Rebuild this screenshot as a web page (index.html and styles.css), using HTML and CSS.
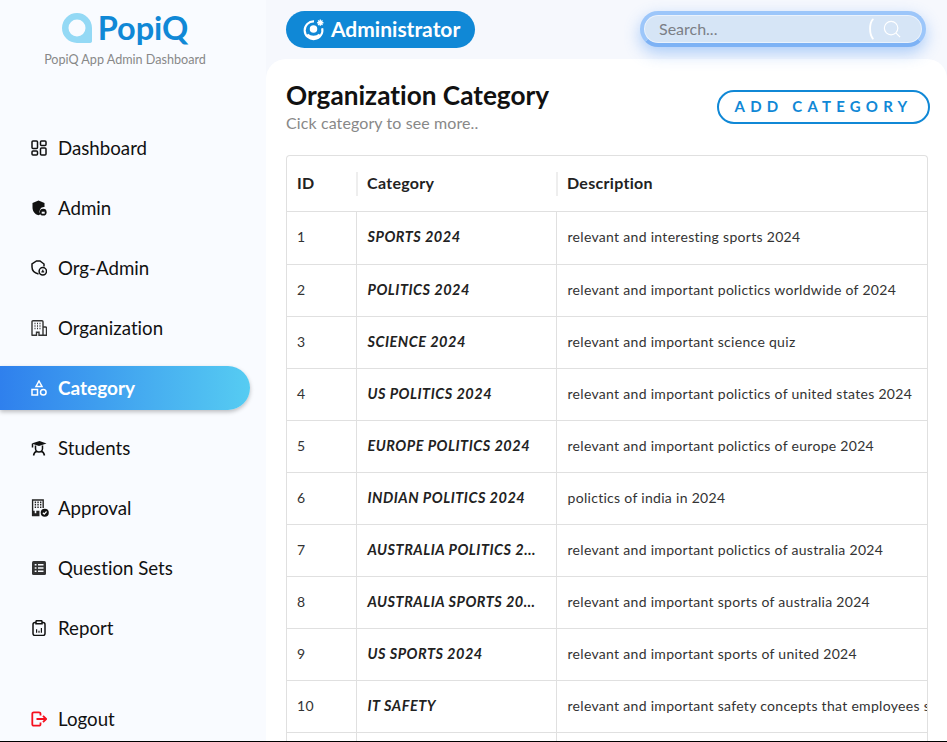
FILE: index.html
```html
<!DOCTYPE html>
<html lang="en">
<head>
  <meta charset="UTF-8">
  <title>PopiQ App Admin Dashboard</title>
  <link rel="stylesheet" href="styles.css">
</head>
<body>
  <aside class="sidebar">
    <div class="brand">
      <div class="brand-row">
        <svg class="brand-q" viewBox="0 0 30 30"><path fill-rule="evenodd" d="M15 0a15 15 0 0 1 15 15v12.500a2 2 0 0 1-2 2.500H15a15 15 0 0 1 0-30zM15 6.500a8.500 8.500 0 1 0 0 17 8.500 8.500 0 0 0 0-17z" fill="#94d9f5"/></svg>
        <span class="brand-name">PopiQ</span>
      </div>
      <div class="brand-sub">PopiQ App Admin Dashboard</div>
    </div>
    <nav class="nav">
      <a class="nav-item" href="#">
        <svg class="nav-icon" viewBox="0 0 16 16" fill="none" stroke="#111" stroke-width="1.5"><rect x="1" y="1" width="5.500" height="7.500" rx="1"/><rect x="9.500" y="1" width="5.500" height="4.500" rx="1"/><rect x="1" y="11" width="5.500" height="4" rx="1"/><rect x="9.500" y="8" width="5.500" height="7" rx="1"/></svg>
        <span class="nav-label">Dashboard</span>
      </a>
      <a class="nav-item" href="#">
        <svg class="nav-icon" viewBox="0 0 16 16"><path d="M7.500 .5l6 2.500v4a4.500 4.500 0 0 0-4 7.300l-2 1C3.500 14.300 1.500 11 1.500 7.500V3z" fill="#111"/><circle cx="12.200" cy="12.200" r="3.400" fill="#111"/><rect x="10.700" y="11.700" width="3" height="2" fill="#f9fbff"/></svg>
        <span class="nav-label">Admin</span>
      </a>
      <a class="nav-item" href="#">
        <svg class="nav-icon" viewBox="0 0 16 16" fill="none" stroke="#111" stroke-width="1.500"><path d="M7.500 14C3.500 13 1 10.500 1 7V4l4.500-3h3.500l4 3v2.500"/><circle cx="11.800" cy="11.300" r="3.700"/><path d="M10.400 11.800h2.800M11.800 9.700v1.800" stroke-width="1.200"/></svg>
        <span class="nav-label">Org-Admin</span>
      </a>
      <a class="nav-item" href="#">
        <svg class="nav-icon" viewBox="0 0 16 16" fill="none" stroke="#333" stroke-width="1.400"><path d="M1 15.300V1.700a1 1 0 0 1 1-1h9a1 1 0 0 1 1 1v13.600M.5 15.300h5v-3h2.500v3h4M12 7h2.500a1 1 0 0 1 1 1v7.300H12"/><path d="M3.500 3.500h1M6 3.500h1M8.500 3.500h1M3.500 6h1M6 6h1M8.500 6h1M3.500 8.500h1M6 8.500h1M8.500 8.500h1" stroke-width="1.300"/></svg>
        <span class="nav-label">Organization</span>
      </a>
      <a class="nav-item active" href="#">
        <svg class="nav-icon" viewBox="0 0 16 16" fill="none" stroke="#fff" stroke-width="1.500"><path d="M8 1l3 5.500H5z"/><rect x="1" y="9.500" width="5.500" height="5.500"/><circle cx="12.300" cy="12.200" r="2.800"/></svg>
        <span class="nav-label">Category</span>
      </a>
      <a class="nav-item" href="#">
        <svg class="nav-icon" viewBox="0 0 16 16"><path d="M.5 3.500L8.500 1 15.500 3.500 8 6z" fill="#111"/><path d="M1.500 4v3.500M4.500 5.500v3a3.500 3.500 0 0 0 7 0v-3M2.500 15.500c.5-2.800 2-4 3.500-4.500M13.500 15.500c-.5-2.800-2-4-3.500-4.500" fill="none" stroke="#111" stroke-width="1.500"/></svg>
        <span class="nav-label">Students</span>
      </a>
      <a class="nav-item" href="#">
        <svg class="nav-icon wide" viewBox="0 0 17 17"><path d="M1.500 16V1h10v7.500" fill="none" stroke="#222" stroke-width="1.300"/><path d="M3.500 3.200h1.300M6 3.200h1.300M8.500 3.200h1.300M3.500 5.500h1.300M6 5.500h1.300M8.500 5.500h1.300M3.500 7.800h1.300M6 7.800h1.300M8.500 7.800h1.300" stroke="#222" stroke-width="1.500"/><path d="M1 16.300h7V11H5v2.500H3.500V11H1z" fill="#222"/><circle cx="13" cy="13" r="3.800" fill="#111"/><path d="M11.200 13l1.300 1.300 2.200-2.500" fill="none" stroke="#fff" stroke-width="1.100"/></svg>
        <span class="nav-label">Approval</span>
      </a>
      <a class="nav-item" href="#">
        <svg class="nav-icon" viewBox="0 0 16 16"><rect x="1" y="1" width="14" height="14" rx="1.500" fill="#333"/><path d="M3.700 4.800h1.800M7 4.800h5.500M3.700 8h1.800M7 8h5.500M3.700 11.200h1.800M7 11.200h5.500" stroke="#f9fbff" stroke-width="1.600"/></svg>
        <span class="nav-label">Question Sets</span>
      </a>
      <a class="nav-item" href="#">
        <svg class="nav-icon" viewBox="0 0 16 16" fill="none" stroke="#111" stroke-width="1.500"><rect x="2" y="2.500" width="12" height="13" rx="2"/><path d="M5 3.700V1.500a.8.8 0 0 1 .8-.8h4.400a.8.8 0 0 1 .8.800v2.200z" fill="#f9fbff"/><path d="M5.600 12.800V9.300M8 12.800V10.800M10.400 12.800V8" stroke-width="1.200"/></svg>
        <span class="nav-label">Report</span>
      </a>
      <a class="nav-item logout" href="#">
        <svg class="nav-icon" viewBox="0 0 16 16" fill="none" stroke="#f5101f" stroke-width="1.800"><path d="M9.500 4.500V2.800a1.500 1.500 0 0 0-1.500-1.500H2.800a1.500 1.500 0 0 0-1.500 1.500v10.400a1.500 1.500 0 0 0 1.500 1.500H8a1.500 1.500 0 0 0 1.500-1.500v-1.700"/><path d="M5.500 8h9.500M12 4.800L15.200 8 12 11.200"/></svg>
        <span class="nav-label">Logout</span>
      </a>
    </nav>
  </aside>

  <div class="content">
    <header class="topbar">
      <div class="role-badge">
        <svg class="role-icon" viewBox="0 0 22 22" fill="none" stroke="#fff"><path d="M11.500 3.200a8.500 8.500 0 1 0 7.800 6.500" stroke-width="2"/><circle cx="11" cy="10.500" r="3.600" fill="#fff" stroke="none"/><path d="M5 16c3 3 9 3 12 0" stroke-width="2.400"/><path d="M17.500 1.500v6M14.500 4.500h6M15.400 2.400l4.200 4.200M19.600 2.400l-4.200 4.200" stroke-width="1.300"/></svg>
        <span class="role-label">Administrator</span>
      </div>
      <div class="search">
        <span class="search-text">Search...</span>
        <svg class="search-arc" viewBox="0 0 6 24" fill="none"><path d="M5 1.500C1 6 1 17 5 22.500" stroke="#fff" stroke-width="2" stroke-linecap="round"/></svg>
        <svg class="search-icon" viewBox="0 0 20 20" fill="none" stroke="#fff" stroke-width="1.300"><circle cx="9" cy="9" r="7.500"/><path d="M14.500 14.500l4.500 4.500"/></svg>
      </div>
    </header>

    <main class="card">
      <div class="card-head">
        <div>
          <h1 class="title">Organization Category</h1>
          <p class="subtitle">Cick category to see more..</p>
        </div>
        <button class="add-button">ADD CATEGORY</button>
      </div>

      <div class="table-wrap">
        <table class="grid">
          <colgroup>
            <col class="col-id">
            <col class="col-cat">
            <col class="col-desc">
          </colgroup>
          <thead>
            <tr><th>ID</th><th><span class="sep"></span>Category</th><th><span class="sep"></span>Description</th></tr>
          </thead>
          <tbody>
            <tr class="first"><td>1</td><td class="cat">SPORTS 2024</td><td>relevant and interesting sports 2024</td></tr>
            <tr><td>2</td><td class="cat">POLITICS 2024</td><td>relevant and important polictics worldwide of 2024</td></tr>
            <tr><td>3</td><td class="cat">SCIENCE 2024</td><td>relevant and important science quiz</td></tr>
            <tr><td>4</td><td class="cat">US POLITICS 2024</td><td>relevant and important polictics of united states 2024</td></tr>
            <tr><td>5</td><td class="cat">EUROPE POLITICS 2024</td><td>relevant and important polictics of europe 2024</td></tr>
            <tr><td>6</td><td class="cat">INDIAN POLITICS 2024</td><td>polictics of india in 2024</td></tr>
            <tr><td>7</td><td class="cat">AUSTRALIA POLITICS 2024</td><td>relevant and important polictics of australia 2024</td></tr>
            <tr><td>8</td><td class="cat">AUSTRALIA SPORTS 2024</td><td>relevant and important sports of australia 2024</td></tr>
            <tr><td>9</td><td class="cat">US SPORTS 2024</td><td>relevant and important sports of united 2024</td></tr>
            <tr><td>10</td><td class="cat">IT SAFETY</td><td>relevant and important safety concepts that employees should know</td></tr>
            <tr><td></td><td class="cat"></td><td></td></tr>
          </tbody>
        </table>
      </div>
    </main>
  </div>
</body>
</html>
```

FILE: styles.css
```css
html, body {
  margin: 0;
  padding: 0;
  height: 742px;
  overflow: hidden;
}
body {
  display: flex;
  box-sizing: border-box;
  border-bottom: 1px solid #000;
  font-family: Lato, "Noto Sans", sans-serif;
  font-variant-ligatures: none;
  color: #111;
  background: #f9fbff;
}
.sidebar {
  width: 266px;
  flex-shrink: 0;
  display: flex;
  flex-direction: column;
}
.brand {
  height: 126px;
  display: flex;
  flex-direction: column;
  align-items: center;
  padding: 13px 16px 0 0;
  box-sizing: border-box;
}
.brand-row {
  display: flex;
  align-items: center;
  gap: 6px;
  height: 30px;
}
.brand-q {
  width: 30px;
  height: 30px;
}
.brand-name {
  font-size: 32.5px;
  font-weight: 700;
  color: #1088d6;
  padding-bottom: 1px;
}
.brand-sub {
  font-size: 12.6px;
  color: #888;
  margin-top: 9px;
}
.nav {
  flex: 1;
  display: flex;
  flex-direction: column;
  gap: 16px;
}
.nav-item {
  height: 44px;
  width: 250px;
  box-sizing: border-box;
  padding-left: 31px;
  display: flex;
  align-items: center;
  gap: 11px;
  font-size: 18.7px;
  color: #111;
  text-decoration: none;
  border-radius: 0 22px 22px 0;
}
.nav-label {
  padding-bottom: 1px;
}
.nav-icon {
  width: 16px;
  height: 16px;
  flex-shrink: 0;
}
.nav-icon.wide {
  width: 18px;
  height: 18px;
  margin-right: -2px;
}
.nav-item.active {
  background: linear-gradient(90deg, #2f80ed, #56ccf2);
  color: #fff;
  font-weight: 700;
  font-size: 19px;
  box-shadow: 0 2px 4px rgba(0, 0, 0, 0.25);
}
.nav-item.logout {
  margin-top: auto;
}
.content {
  flex: 1;
  min-width: 0;
  display: flex;
  flex-direction: column;
  background: #f6f8fd;
}
.topbar {
  height: 59px;
  flex-shrink: 0;
  display: flex;
  align-items: flex-start;
  justify-content: space-between;
  padding: 11px 20px 0;
  box-sizing: border-box;
  position: relative;
  z-index: 1;
}
.role-badge {
  height: 37px;
  width: 189px;
  box-sizing: border-box;
  padding-left: 16px;
  display: flex;
  align-items: center;
  gap: 6px;
  border-radius: 19px;
  background: #1088d6;
  color: #fff;
  font-size: 21px;
  font-weight: 700;
}
.role-label {
  padding-bottom: 2px;
}
.role-icon {
  width: 23px;
  height: 23px;
}
.search {
  width: 286px;
  height: 36px;
  box-sizing: border-box;
  display: flex;
  align-items: center;
  margin-right: 1px;
  padding-left: 15px;
  border: 4px solid #9cc6fa;
  border-bottom-color: #7db2f5;
  border-radius: 18px;
  background: #d6e5f6;
  box-shadow: 0 6px 16px rgba(80, 150, 245, 0.45), inset 0 0 0 1px #eaf2fc;
}
.search-text {
  flex: 1;
  font-size: 16px;
  color: #7b7f86;
  padding-bottom: 2px;
}
.search-arc {
  width: 6px;
  height: 22px;
}
.search-icon {
  width: 18px;
  height: 18px;
  margin: 0 21px 0 9px;
}
.card {
  flex: 1;
  min-height: 0;
  background: #fff;
  border-radius: 20px 20px 0 0;
  padding: 0 19px 0 20px;
  overflow: hidden;
}
.card-head {
  height: 96px;
  display: flex;
  justify-content: space-between;
  align-items: flex-start;
}
.title {
  margin: 19px 0 0;
  font-size: 26.2px;
  font-weight: 700;
  line-height: 34px;
  color: #111;
}
.subtitle {
  margin: -1px 0 0;
  font-size: 16px;
  letter-spacing: 0.1px;
  line-height: 24px;
  color: #888;
}
.add-button {
  margin: 31px -2px 0 0;
  width: 213px;
  height: 34px;
  padding: 0 0 2px;
  border: 2px solid #1088d6;
  border-radius: 17px;
  background: #fff;
  color: #1088d6;
  font-family: inherit;
  font-size: 15px;
  font-weight: 700;
  letter-spacing: 5.2px;
}
.table-wrap {
  border: 1px solid #e0e0e0;
  border-bottom: none;
  border-radius: 4px 4px 0 0;
  height: 600px;
  overflow: hidden;
}
.grid {
  width: 100%;
  table-layout: fixed;
  border-collapse: collapse;
  font-size: 14px;
  letter-spacing: 0.3px;
}
.col-id {
  width: 69px;
}
.col-cat {
  width: 200px;
}
.grid th {
  height: 55px;
  padding: 0 10px 2px;
  box-sizing: border-box;
  text-align: left;
  font-size: 16px;
  font-weight: 700;
  color: #222;
  position: relative;
  border-bottom: 1px solid #e0e0e0;
}
.grid th:not(:first-child) {
  padding-left: 11px;
}
.sep {
  position: absolute;
  left: 0;
  top: 16px;
  width: 2px;
  height: 24px;
  background: #eeeeee;
}
.grid td {
  height: 49px;
  padding: 0 10px 2px;
  white-space: nowrap;
  overflow: hidden;
  color: #333;
  border-bottom: 1px solid #e0e0e0;
  border-left: 1px solid #e0e0e0;
}
.grid td:first-child {
  border-left: none;
}
.grid td:not(:first-child) {
  padding-left: 11px;
}
.grid .first td {
  height: 50px;
}
.grid td.cat {
  font-size: 14.5px;
  font-weight: 700;
  font-style: italic;
  letter-spacing: 0.5px;
  color: #222;
  text-overflow: ellipsis;
  padding-right: 16px;
}
```
